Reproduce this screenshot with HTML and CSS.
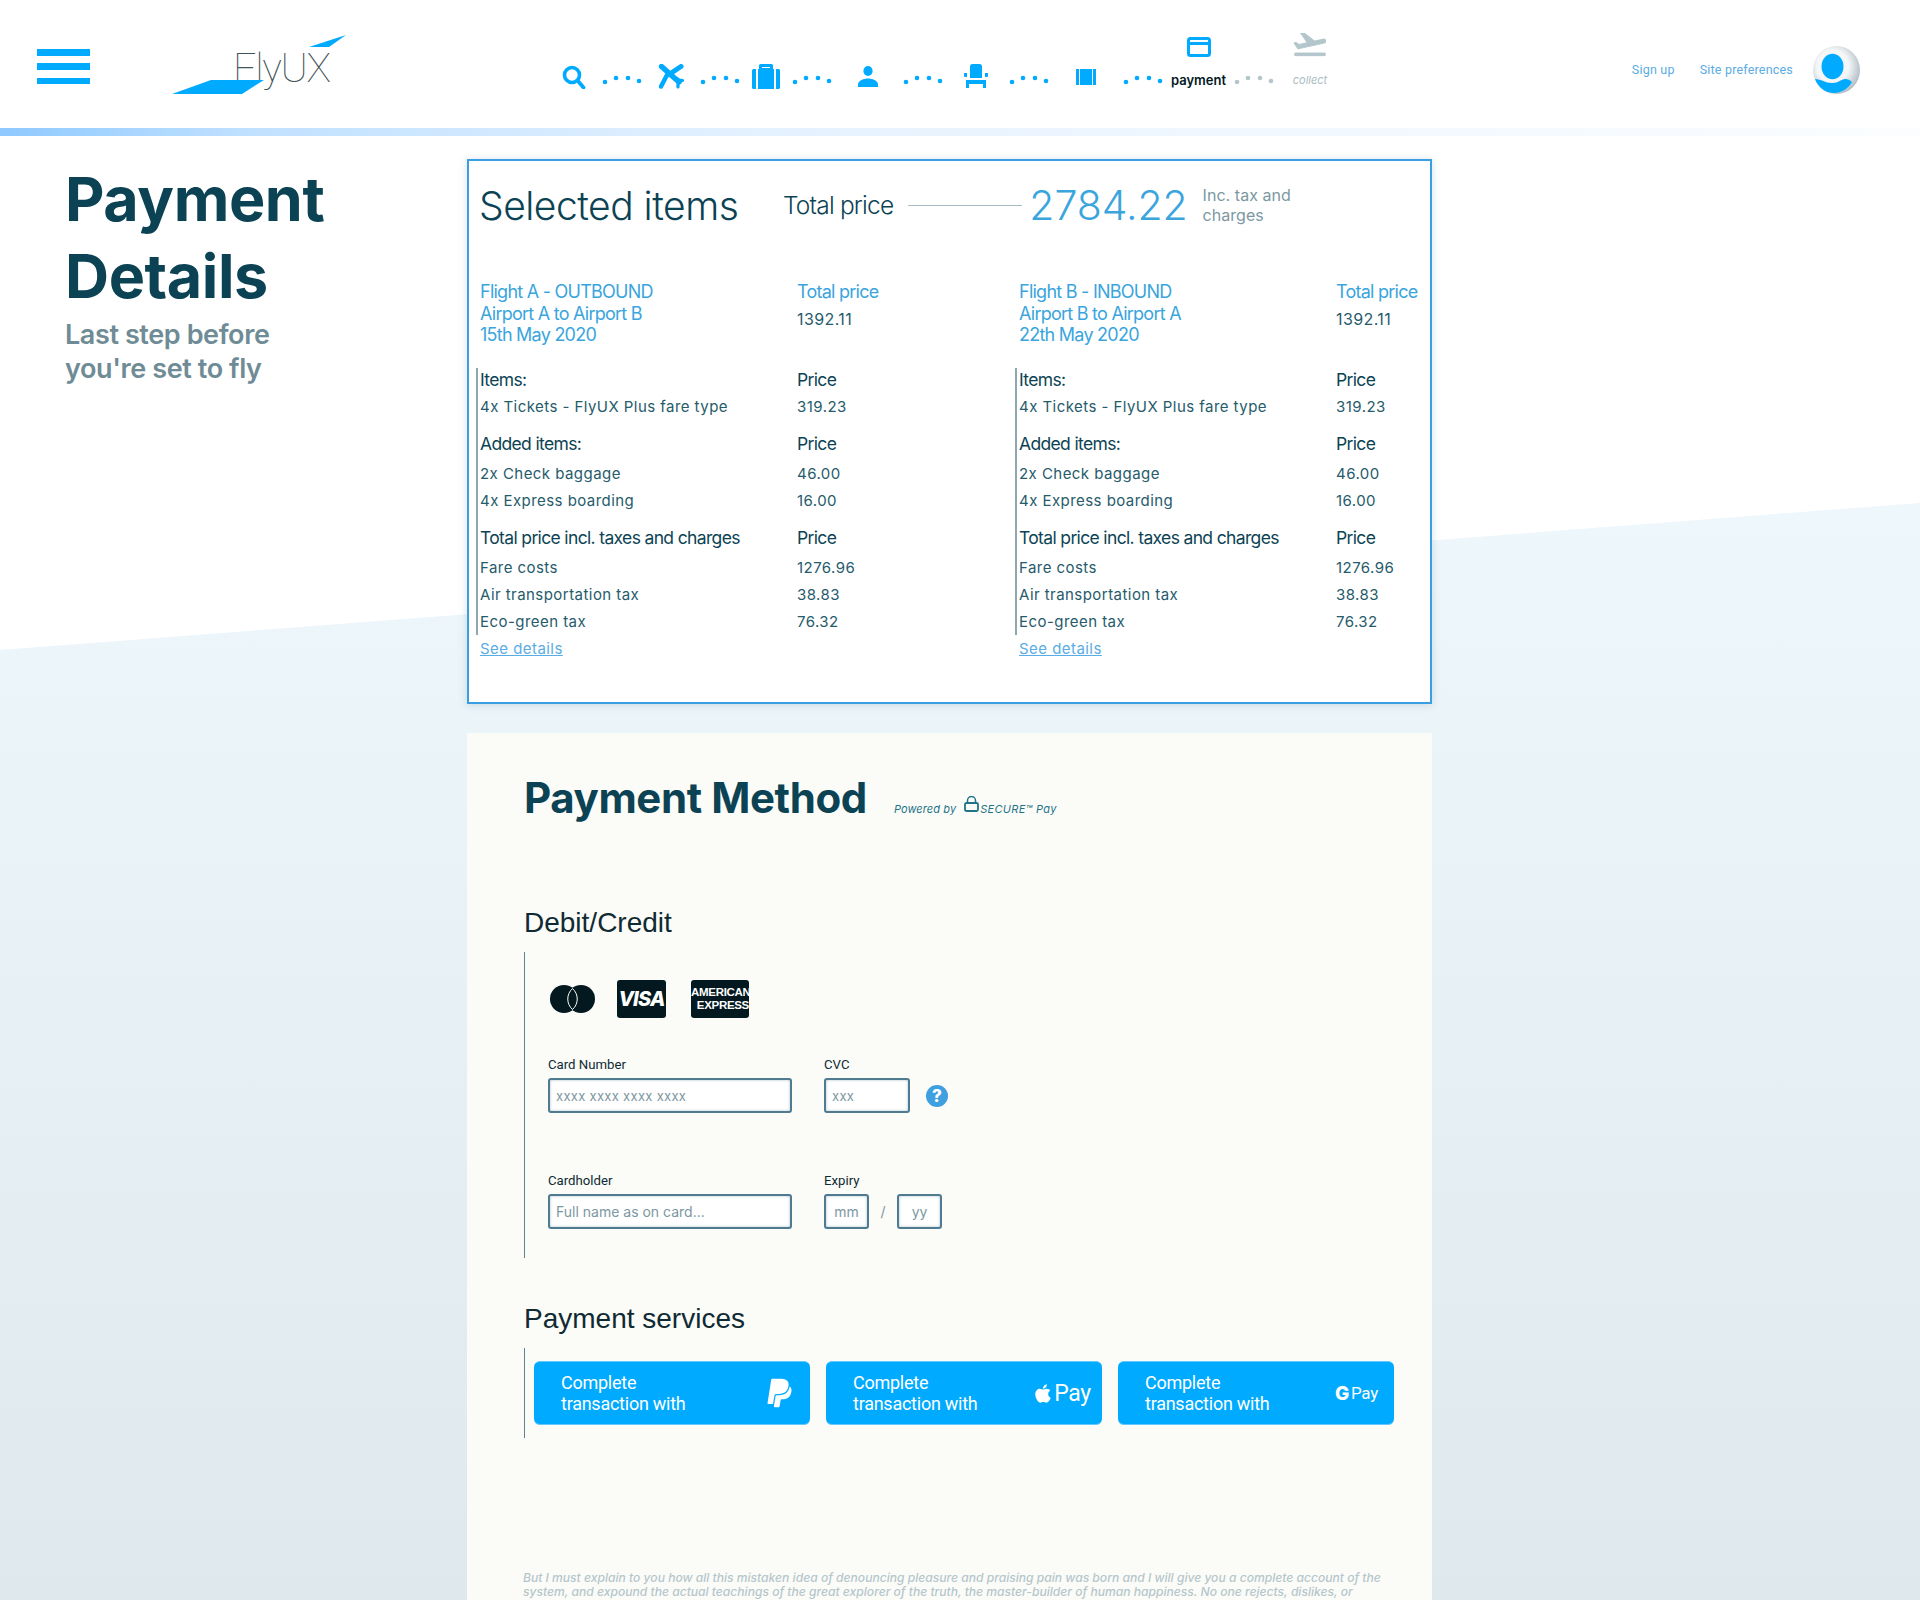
FILE: index.html
```html
<!DOCTYPE html>
<html lang="en">
<head>
    <meta charset="UTF-8">
    <meta name="viewport" content="width=device-width, initial-scale=1.0">
    <title>FlyUX - Payment Details</title>
    <link rel="stylesheet" href="styles.css">
</head>
<body>
    <svg class="defs" width="0" height="0">
        <symbol id="dots" viewBox="0 0 40 26">
            <circle cx="3" cy="18" r="2.300"/><circle cx="14" cy="14" r="2.300"/><circle cx="26" cy="14" r="2.300"/><circle cx="37" cy="17" r="2.300"/>
        </symbol>
    </svg>
    <div class="sky"></div>

    <header class="topbar">
        <button class="burger"><span></span><span></span><span></span></button>
        <a class="logo">
            <svg width="180" height="60" viewBox="0 0 180 60">
                <text class="logo-text" x="61" y="47">FlyUX</text>
                <polygon class="logo-wing" points="0,59 39,45 92,45 70,59"/>
                <polygon class="logo-wing" points="137,12 174,0 157,12"/>
            </svg>
        </a>
        <div class="steps">
            <div class="step step-search">
                <svg width="24" height="24" viewBox="0 0 24 24"><circle cx="10" cy="10" r="7.500" fill="none" stroke="#00aaff" stroke-width="3.600"/><path d="M15.500 15.500l6 7" stroke="#00aaff" stroke-width="3.800" stroke-linecap="round"/></svg>
            </div>
            <svg class="dots" width="40" height="26"><use href="#dots"/></svg>
            <div class="step step-flight">
                <svg width="25" height="25" viewBox="0 0 25 25" fill="none" stroke="#00aaff" stroke-linecap="round">
                    <path d="M2.500 2.500L20 18" stroke-width="5.500"/>
                    <path d="M22 2.500L10 10.500" stroke-width="5"/>
                    <path d="M2 22.500L8 11" stroke-width="4.500"/>
                    <path d="M16 15.500L23.500 16.500" stroke-width="3.200"/>
                    <path d="M19 15L19 23" stroke-width="3.200"/>
                </svg>
            </div>
            <svg class="dots" width="40" height="26"><use href="#dots"/></svg>
            <div class="step step-bag">
                <svg width="28" height="25" viewBox="0 0 28 25"><path d="M1.500 5H4v20H1.500A1.500 1.500 0 0 1 0 23.500V6.500A1.500 1.500 0 0 1 1.500 5zM24 5h2.500A1.500 1.500 0 0 1 28 6.500v17a1.500 1.500 0 0 1-1.500 1.500H24zM7 5V1.500A1.500 1.500 0 0 1 8.500 0h11A1.500 1.500 0 0 1 21 1.500V5h1v20H6V5zm3-1h8V3h-8z" fill="#00aaff"/></svg>
            </div>
            <svg class="dots" width="40" height="26"><use href="#dots"/></svg>
            <div class="step step-person">
                <svg width="20" height="21" viewBox="0 0 20 21"><ellipse cx="10" cy="5" rx="4.600" ry="5" fill="#00aaff"/><path d="M0 21v-2.500C0 14.500 6 12.500 10 12.500s10 2 10 6V21z" fill="#00aaff"/></svg>
            </div>
            <svg class="dots" width="40" height="26"><use href="#dots"/></svg>
            <div class="step step-seat">
                <svg width="24" height="24" viewBox="0 0 24 24"><path d="M6 9V2.500A2.500 2.500 0 0 1 8.500 0h7A2.500 2.500 0 0 1 18 2.500V14H6zM0 9h3v4H1a1 1 0 0 1-1-1zM21 9h3v3a1 1 0 0 1-1 1h-2zM2 16h20v8h-3v-4H5v4H2z" fill="#00aaff"/></svg>
            </div>
            <svg class="dots" width="40" height="26"><use href="#dots"/></svg>
            <div class="step step-ticket">
                <svg width="20" height="16" viewBox="0 0 20 16"><path d="M0 0h3v16H0zM4 0h12v16H4zM17 0h3v16h-3z" fill="#00aaff"/></svg>
            </div>
            <svg class="dots" width="40" height="26"><use href="#dots"/></svg>
            <div class="step step-payment">
                <svg width="24" height="20" viewBox="0 0 24 20"><rect x="1.500" y="1.500" width="21" height="17" rx="2" fill="#fff" stroke="#00aaff" stroke-width="3"/><rect x="2" y="5" width="20" height="3" fill="#00aaff"/></svg>
                <span class="step-label">payment</span>
            </div>
            <svg class="dots dots-off" width="40" height="26"><use href="#dots"/></svg>
            <div class="step step-collect">
                <svg width="32" height="24" viewBox="2 4 20 18" preserveAspectRatio="none"><path d="M2.500 19h19v2h-19zm19.570-9.360c-.21-.8-1.040-1.280-1.840-1.060L14.920 10l-6.900-6.430-1.930.51 4.140 7.170-4.970 1.330-1.970-1.540-1.450.39 1.820 3.160.77 1.330 1.600-.43 5.310-1.420 4.350-1.160L21 11.490c.81-.23 1.280-1.050 1.070-1.850z" fill="#b3c6cb" stroke="#b3c6cb" stroke-width=".6"/></svg>
                <span class="step-label step-label-off">collect</span>
            </div>
        </div>
        <nav class="top-links">
            <a>Sign up</a>
            <a>Site preferences</a>
        </nav>
        <svg class="avatar" width="47" height="48" viewBox="0 0 47 48">
            <defs>
                <radialGradient id="ring" cx="42%" cy="42%" r="62%"><stop offset="55%" stop-color="#f4f6f7"/><stop offset="100%" stop-color="#aebbc3"/></radialGradient>
            </defs>
            <ellipse cx="23.500" cy="24" rx="23.500" ry="24" fill="url(#ring)"/>
            <ellipse cx="19.500" cy="20.500" rx="11" ry="12.800" fill="#00aaff"/>
            <path d="M2 33C8 33 12 37 19 37S28 33 32 33C35 33 37 34 39 36C35 43 28 47 21 47C12 47 5 41 2 33z" fill="#00aaff"/>
        </svg>
    </header>
    <div class="progress"></div>

    <main class="content">
        <aside class="intro">
            <h1>Payment Details</h1>
            <p>Last step before you're set to fly</p>
        </aside>
        <div class="panels">
            <section class="card">
                <div class="card-title">
                    <h2>Selected items</h2>
                    <span class="total-label">Total price</span>
                    <span class="total-line"></span>
                    <span class="total-value">2784.22</span>
                    <span class="total-note">Inc. tax and charges</span>
                </div>
                <div class="flights">
                    <div class="flight">
                        <div class="flight-head">
                            <div class="flight-name">Flight A - OUTBOUND<br>Airport A to Airport B<br>15th May 2020</div>
                            <div>
                                <div class="flight-name">Total price</div>
                                <div class="flight-total">1392.11</div>
                            </div>
                        </div>
                        <div class="flight-items">
                            <div class="row row-first"><span class="row-head">Items:</span><span class="row-head">Price</span></div>
                            <div class="row"><span>4x Tickets - FlyUX Plus fare type</span><span>319.23</span></div>
                            <div class="row row-group"><span class="row-head">Added items:</span><span class="row-head">Price</span></div>
                            <div class="row"><span>2x Check baggage</span><span>46.00</span></div>
                            <div class="row"><span>4x Express boarding</span><span>16.00</span></div>
                            <div class="row row-group"><span class="row-head">Total price incl. taxes and charges</span><span class="row-head">Price</span></div>
                            <div class="row"><span>Fare costs</span><span>1276.96</span></div>
                            <div class="row"><span>Air transportation tax</span><span>38.83</span></div>
                            <div class="row row-last"><span>Eco-green tax</span><span>76.32</span></div>
                        </div>
                        <a class="see-details">See details</a>
                    </div>
                    <div class="flight">
                        <div class="flight-head">
                            <div class="flight-name">Flight B - INBOUND<br>Airport B to Airport A<br>22th May 2020</div>
                            <div>
                                <div class="flight-name">Total price</div>
                                <div class="flight-total">1392.11</div>
                            </div>
                        </div>
                        <div class="flight-items">
                            <div class="row row-first"><span class="row-head">Items:</span><span class="row-head">Price</span></div>
                            <div class="row"><span>4x Tickets - FlyUX Plus fare type</span><span>319.23</span></div>
                            <div class="row row-group"><span class="row-head">Added items:</span><span class="row-head">Price</span></div>
                            <div class="row"><span>2x Check baggage</span><span>46.00</span></div>
                            <div class="row"><span>4x Express boarding</span><span>16.00</span></div>
                            <div class="row row-group"><span class="row-head">Total price incl. taxes and charges</span><span class="row-head">Price</span></div>
                            <div class="row"><span>Fare costs</span><span>1276.96</span></div>
                            <div class="row"><span>Air transportation tax</span><span>38.83</span></div>
                            <div class="row row-last"><span>Eco-green tax</span><span>76.32</span></div>
                        </div>
                        <a class="see-details">See details</a>
                    </div>
                </div>
            </section>

            <section class="method">
                <div class="method-title">
                    <h2>Payment Method</h2>
                    <span class="powered powered-by">Powered by</span>
                    <svg class="lock" width="15" height="16" viewBox="0 0 15 16"><path d="M3.500 7V4.500a4 4 0 0 1 8 0V7" fill="none" stroke="#1f7488" stroke-width="1.500"/><rect x="1" y="7" width="13" height="8" rx="1.500" fill="none" stroke="#1f7488" stroke-width="1.800"/></svg>
                    <span class="powered">SECURE™ Pay</span>
                </div>

                <h3 class="section-title section-debit">Debit/Credit</h3>
                <div class="debit">
                    <div class="card-logos">
                        <svg class="logo-mc" width="45" height="28" viewBox="0 0 45 28">
                            <circle cx="14" cy="14" r="14" fill="#03191f"/><circle cx="31" cy="14" r="14" fill="#03191f"/>
                            <path d="M22.500 3.500a14 14 0 0 1 0 21a14 14 0 0 1 0-21z" fill="#03191f" stroke="#fbfcf8" stroke-width="1"/>
                        </svg>
                        <div class="logo-visa">VISA</div>
                        <div class="logo-amex"><span>AMERICAN</span><span class="amex-low">EXPRESS</span></div>
                    </div>
                    <div class="form-row form-row-first">
                        <div class="field field-wide">
                            <label>Card Number</label>
                            <input class="input input-wide input-code" placeholder="xxxx xxxx xxxx xxxx">
                        </div>
                        <div class="field">
                            <label>CVC</label>
                            <div class="cvc">
                                <input class="input input-cvc input-code" placeholder="xxx">
                                <span class="help">?</span>
                            </div>
                        </div>
                    </div>
                    <div class="form-row">
                        <div class="field field-wide">
                            <label>Cardholder</label>
                            <input class="input input-wide" placeholder="Full name as on card...">
                        </div>
                        <div class="field">
                            <label>Expiry</label>
                            <div class="expiry">
                                <input class="input input-date" placeholder="mm">
                                <span class="slash">/</span>
                                <input class="input input-date" placeholder="yy">
                            </div>
                        </div>
                    </div>
                </div>

                <h3 class="section-title section-services">Payment services</h3>
                <div class="services">
                    <button class="service service-paypal">
                        <span>Complete<br>transaction with</span>
                        <svg width="29" height="32" viewBox="0 0 384 512"><path fill="#fff" d="M111.400 295.900c-3.500 19.200-17.400 108.700-21.500 134-.3 1.800-1 2.500-3 2.500H12.300c-7.600 0-13.100-6.600-12.100-13.900L58.800 46.600c1.500-9.600 10.100-16.900 20-16.900 152.300 0 165.100-3.700 204 11.400 60.100 23.300 65.600 79.500 44 140.300-21.500 62.600-72.500 89.500-140.100 90.300-43.400 .7-69.500-7-75.300 24.200zM357.100 152c-1.800-1.300-2.500-1.800-3 1.300-2 11.400-5.100 22.500-8.800 33.600-39.900 113.800-150.500 103.900-204.500 103.900-6.100 0-10.100 3.300-10.900 9.400-22.600 140.400-27.100 169.700-27.100 169.700-1 7.100 3.500 12.900 10.600 12.900h63.500c8.600 0 15.700-6.300 17.400-14.900 .7-5.400-1.100 6.100 14.400-91.300 4.600-22 14.300-19.700 29.300-19.700 71 0 126.400-28.800 142.900-112.300 6.500-34.800 4.600-71.400-23.800-92.600z"/></svg>
                    </button>
                    <button class="service service-apple">
                        <span>Complete<br>transaction with</span>
                        <span class="pay-mark">
                            <svg width="16" height="21" viewBox="0 0 384 512"><path fill="#fff" d="M318.700 268.700c-.2-36.700 16.400-64.400 50-84.800-18.800-26.900-47.200-41.700-84.700-44.600-35.500-2.800-74.300 20.700-88.500 20.700-15 0-49.400-19.700-76.400-19.700C63.300 141.200 4 184.800 4 273.500q0 39.300 14.400 81.200c12.800 36.700 59 126.700 107.200 125.200 25.200-.6 43-17.900 75.800-17.900 31.800 0 48.300 17.900 76.400 17.900 48.600-.7 90.400-82.500 102.600-119.300-65.200-30.700-61.700-90-61.700-91.900zm-56.600-164.200c27.300-32.400 24.800-61.900 24-72.500-24.100 1.400-52 16.400-67.900 34.900-17.500 19.800-27.800 44.300-25.600 71.900 26.100 2 49.900-11.400 69.500-34.300z"/></svg>
                            <span class="pay-apple">Pay</span>
                        </span>
                    </button>
                    <button class="service service-google">
                        <span>Complete<br>transaction with</span>
                        <span class="pay-mark"><b class="pay-g">G</b><span class="pay-google">Pay</span></span>
                    </button>
                </div>

                <p class="legal">But I must explain to you how all this mistaken idea of denouncing pleasure and praising pain was born and I will give you a complete account of the system, and expound the actual teachings of the great explorer of the truth, the master-builder of human happiness. No one rejects, dislikes, or</p>
            </section>
        </div>
    </main>
</body>
</html>
```

FILE: styles.css
```css
* {
    box-sizing: border-box;
}
html, body {
    height: 1600px;
    overflow: hidden;
}
body {
    margin: 0;
    position: relative;
    background: #fff;
    font-family: Inter, "Liberation Sans", sans-serif;
    color: #0c4354;
}
h1, h2, h3, p {
    margin: 0;
}
.defs {
    position: absolute;
}
.sky {
    position: absolute;
    z-index: -1;
    left: 0;
    right: 0;
    top: 503px;
    height: 1097px;
    background: linear-gradient(to bottom, #eef7fc, #dfe8ec);
    clip-path: polygon(0 147px, 100% 0, 100% 100%, 0 100%);
}

/* top bar */
.topbar {
    display: flex;
    align-items: flex-start;
    height: 128px;
    padding-left: 37px;
}
.burger {
    display: flex;
    flex-direction: column;
    justify-content: space-between;
    width: 53px;
    height: 35px;
    margin-top: 49px;
    padding: 0;
    background: transparent;
    border: none;
}
.burger span {
    height: 6.500px;
    background: #00aaff;
}
.logo {
    display: block;
    width: 180px;
    height: 60px;
    margin: 35px 0 0 82px;
}
.logo-text {
    font-family: Roboto, sans-serif;
    font-weight: 100;
    font-size: 41px;
    letter-spacing: -1.300px;
    fill: #3f5358;
}
.logo-wing {
    fill: #00aaff;
}
.steps {
    display: flex;
    align-items: flex-end;
    height: 90px;
    margin-left: 210px;
}
.dots {
    display: block;
    flex-shrink: 0;
    fill: #00aaff;
}
.dots-off {
    fill: #b3c6cb;
}
.step {
    display: flex;
    flex-direction: column;
    align-items: center;
    justify-content: flex-end;
    flex-shrink: 0;
    height: 60px;
}
.step svg {
    flex-shrink: 0;
}
.step-search {
    width: 24px;
    margin-right: 16px;
    padding-bottom: 1px;
}
.step-flight {
    width: 58px;
    padding: 0 0 1px 1px;
}
.step-bag {
    width: 52px;
    padding-bottom: 1px;
}
.step-person {
    width: 71px;
    padding-bottom: 3px;
}
.step-seat {
    width: 66px;
    padding-bottom: 2px;
}
.step-ticket {
    width: 74px;
    padding-bottom: 5px;
}
.step-payment {
    width: 71px;
}
.step-collect {
    width: 32px;
    margin-left: 20px;
}
.step-label {
    height: 33px;
    padding-top: 15px;
    font-size: 13px;
    line-height: 16px;
    font-weight: 600;
    color: #03191f;
}
.step-label-off {
    font-size: 11px;
    font-style: italic;
    font-weight: 400;
    color: #a9bdc3;
}
.top-links {
    display: flex;
    gap: 25px;
    margin: 62px 0 0 auto;
    font-family: Roboto, sans-serif;
    font-size: 12.500px;
    line-height: 16px;
    letter-spacing: .2px;
    color: #5aace4;
}
.avatar {
    margin: 46px 60px 0 20px;
}
.progress {
    height: 8px;
    background: linear-gradient(to right, #8ec9ff 0, #bfe0ff 240px, #d0e8ff 470px, #e4f1fe 760px, #f0f7ff 1230px, #fbfdff 100%);
}

/* page columns */
.content {
    display: flex;
    padding: 23px 0 0 65px;
}
.intro {
    width: 402px;
}
.intro h1 {
    width: 300px;
    margin-top: 2px;
    font-size: 61px;
    line-height: 77px;
    font-weight: 700;
    letter-spacing: -.4px;
}
.intro p {
    width: 260px;
    margin-top: 3px;
    font-size: 27px;
    line-height: 34px;
    font-weight: 600;
    letter-spacing: -.4px;
    color: #6f8c96;
}
.panels {
    width: 965px;
}

/* selected items */
.card {
    height: 545px;
    padding: 19px 11px 0;
    background: #fff;
    border: 2px solid #3a9ee2;
    box-shadow: 0 1px 8px rgba(90, 130, 160, .25);
}
.card-title {
    display: flex;
    align-items: center;
    height: 50px;
}
.card-title h2 {
    width: 304px;
    margin-left: -1px;
    font-size: 39px;
    font-weight: 300;
    letter-spacing: -.5px;
}
.total-label {
    font-size: 24.500px;
    font-weight: 300;
    letter-spacing: -.8px;
}
.total-line {
    flex-shrink: 0;
    width: 114px;
    height: 1px;
    margin: 0 7px 0 15px;
    background: #a8bcc4;
}
.total-value {
    font-size: 41px;
    font-weight: 300;
    letter-spacing: -.1px;
    color: #3aa5dd;
}
.total-note {
    width: 110px;
    margin-left: 15px;
    font-size: 16px;
    line-height: 20px;
    letter-spacing: .05px;
    color: #7d98a2;
}
.flights {
    display: grid;
    grid-template-columns: 453px 453px;
    column-gap: 86px;
    margin-top: 51px;
}
.flight-head {
    display: grid;
    grid-template-columns: 317px auto;
    height: 87px;
}
.flight-name {
    font-size: 18px;
    line-height: 21.500px;
    letter-spacing: -.75px;
    color: #3aa5dd;
}
.flight-total {
    margin-top: 6px;
    font-size: 16px;
    line-height: 20px;
    letter-spacing: .4px;
    color: #265b6b;
}
.flight-items {
    margin-left: -4px;
    padding-left: 2px;
    border-left: 2px solid #8fa7b0;
}
.row {
    display: grid;
    grid-template-columns: 317px auto;
    align-items: center;
    height: 27px;
    font-size: 15px;
    letter-spacing: .45px;
    color: #265b6b;
}
.row-head {
    font-size: 17.500px;
    letter-spacing: -.65px;
    color: #0c4354;
}
.row-first {
    height: 25px;
    padding-bottom: 3px;
}
.row-group {
    margin-top: 10px;
    margin-bottom: 3px;
}
.row-last {
    margin-bottom: -11px;
}
.see-details {
    display: block;
    margin-top: 11px;
    width: max-content;
    font-size: 15px;
    line-height: 27px;
    letter-spacing: .45px;
    color: #5aace4;
    text-decoration: underline;
}

/* payment method */
.method {
    height: 867px;
    margin-top: 29px;
    padding: 40px 0 0 57px;
    background: #fbfcf8;
}
.method-title {
    display: flex;
    align-items: baseline;
    height: 50px;
}
.method-title h2 {
    font-size: 42px;
    line-height: 50px;
    font-weight: 700;
    letter-spacing: -.4px;
    margin-right: 27px;
}
.powered {
    font-size: 11px;
    font-style: italic;
    letter-spacing: .3px;
    color: #1f7488;
}
.powered-by {
    letter-spacing: .1px;
}
.lock {
    align-self: flex-end;
    margin: 0 1px 11px 8px;
}
.section-title {
    font-family: "Liberation Sans", sans-serif;
    font-size: 28px;
    line-height: 36px;
    font-weight: 400;
    color: #0f2a33;
}
.section-debit {
    margin-top: 82px;
}
.section-services {
    margin-top: 43px;
}
.debit {
    height: 306px;
    margin-top: 11px;
    padding: 28px 0 0 23px;
    border-left: 1px solid #5f8496;
}
.card-logos {
    display: flex;
    align-items: center;
    height: 38px;
    padding-left: 2px;
}
.logo-mc {
    margin-right: 22px;
}
.logo-visa {
    width: 49px;
    height: 38px;
    margin-right: 25px;
    border-radius: 3px;
    background: #03191f;
    color: #fff;
    font-size: 20px;
    font-weight: 800;
    font-style: italic;
    line-height: 38px;
    text-align: center;
    letter-spacing: -.8px;
}
.logo-amex {
    display: flex;
    flex-direction: column;
    justify-content: center;
    width: 58px;
    height: 38px;
    border-radius: 3px;
    background: #03191f;
    color: #fff;
    font-family: "Liberation Sans Narrow", "Liberation Sans", sans-serif;
    font-size: 11.500px;
    font-weight: 700;
    line-height: 13px;
    letter-spacing: -.3px;
    white-space: nowrap;
}
.amex-low {
    align-self: flex-end;
}
.form-row {
    display: flex;
    margin-top: 60px;
}
.form-row-first {
    margin-top: 39px;
}
.field-wide {
    width: 276px;
}
.field label {
    display: block;
    margin-bottom: 5px;
    font-family: Roboto, sans-serif;
    font-size: 13.200px;
    line-height: 16px;
    color: #0f2a33;
}
.input {
    display: block;
    height: 35px;
    padding: 0 6px;
    background: #fff;
    border: 2px solid #4f7b90;
    border-radius: 3px;
    box-shadow: inset 0 0 3px rgba(79, 123, 144, .45);
    font-family: Inter, sans-serif;
    font-size: 14px;
    outline: none;
}
.input::placeholder {
    color: #7d97a2;
    opacity: 1;
}
.input-wide {
    width: 244px;
}
.input-code {
    font-size: 13px;
    letter-spacing: .3px;
}
.input-cvc {
    width: 86px;
}
.input-date {
    width: 45px;
    text-align: center;
}
.cvc, .expiry {
    display: flex;
    align-items: center;
}
.help {
    width: 22px;
    height: 22px;
    margin-left: 16px;
    border-radius: 50%;
    background: #3f9fdf;
    color: #fff;
    font-size: 17px;
    font-weight: 800;
    line-height: 22px;
    text-align: center;
}
.slash {
    width: 28px;
    color: #7d97a2;
    font-size: 14px;
    text-align: center;
}
.services {
    display: flex;
    gap: 16px;
    height: 90px;
    margin-top: 11px;
    padding: 13px 0 0 9px;
    border-left: 1px solid #5f8496;
}
.service {
    display: flex;
    align-items: center;
    justify-content: space-between;
    width: 276px;
    height: 64px;
    padding: 0 16px 0 27px;
    background: #00aaff;
    border: none;
    border-top: 1px solid #62c8ff;
    border-bottom: 1px solid #62c8ff;
    border-radius: 6px;
    color: #fff;
    font-family: Roboto, sans-serif;
    font-size: 18px;
    line-height: 21px;
    letter-spacing: -.25px;
    text-align: left;
}
.service-apple {
    padding-right: 11px;
}
.pay-mark {
    display: flex;
    align-items: center;
}
.pay-apple {
    margin-left: 3px;
    font-size: 23px;
}
.pay-g {
    font-family: Inter, sans-serif;
    font-size: 19px;
    font-weight: 800;
}
.pay-google {
    margin-left: 2px;
    font-size: 17px;
}
.legal {
    width: 865px;
    margin: 133px 0 0 -1px;
    font-size: 12.100px;
    line-height: 14px;
    font-style: italic;
    font-weight: 500;
    color: #b5c6cc;
}
```
